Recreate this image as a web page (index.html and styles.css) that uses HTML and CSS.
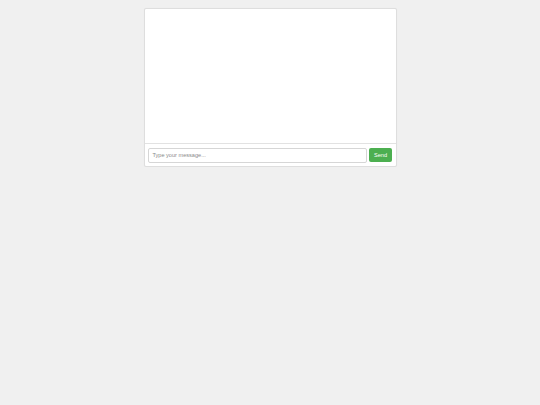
FILE: index.html
```html
<!DOCTYPE html>
<html lang="en">
<head>
<meta charset="utf-8">
<title>Chat</title>
<link rel="stylesheet" href="styles.css">
</head>
<body>
  <div class="chat">
    <div class="messages"></div>
    <form class="input-area">
      <input class="message-input" type="text" placeholder="Type your message...">
      <button class="send-button" type="button">Send</button>
    </form>
  </div>
</body>
</html>
```

FILE: styles.css
```css
html, body {
  margin: 0;
  padding: 0;
}

body {
  background: #f0f0f0;
  font-family: "Liberation Sans", Arial, sans-serif;
}

.chat {
  box-sizing: border-box;
  width: 253px;
  margin: 8px auto 0;
  background: #ffffff;
  border: 1px solid #dedede;
  border-radius: 2px;
  box-shadow: 0 0 1px rgba(0, 0, 0, 0.06);
}

.messages {
  height: 134px;
  border-bottom: 1px solid #e2e2e2;
}

.input-area {
  display: flex;
  align-items: flex-start;
  gap: 2.5px;
  margin: 0;
  padding: 4px 3.5px 3.5px;
}

.message-input {
  flex: 1;
  min-width: 0;
  box-sizing: border-box;
  height: 14.5px;
  margin: 0;
  padding: 0 3.4px;
  font-family: "Liberation Sans", Arial, sans-serif;
  font-size: 5.6px;
  color: #333;
  background: #fff;
  border: 1px solid #d6d6d6;
  border-radius: 2px;
  outline: none;
}

.message-input::placeholder {
  color: #8a8a8a;
}

.send-button {
  box-sizing: border-box;
  width: 23px;
  height: 13.5px;
  margin: 0;
  padding: 0;
  font-family: "Liberation Sans", Arial, sans-serif;
  font-size: 5.6px;
  color: #ffffff;
  background: #4caf50;
  border: none;
  border-radius: 2px;
}
```
